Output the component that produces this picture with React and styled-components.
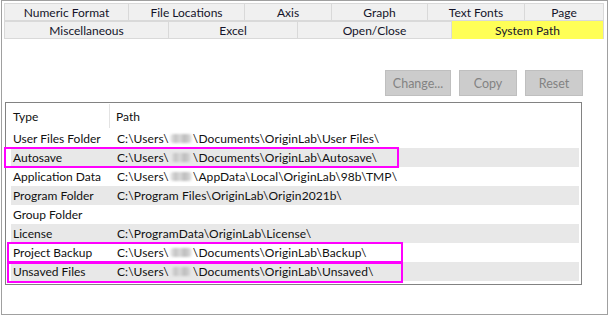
import React from "react";
import styled, { createGlobalStyle } from "styled-components";

const GlobalStyle = createGlobalStyle`
  html, body {
    margin: 0;
    padding: 0;
    background: #ffffff;
  }
  body {
    font-family: "Lato", "Noto Sans", sans-serif;
    font-size: 12px;
    color: #111111;
  }
`;

const Window = styled.div`
  box-sizing: border-box;
  width: 607px;
  height: 315px;
  margin-left: 1px;
  padding: 2px 2px 0 2px;
  border: 1px solid #a0a0a0;
  background: #ffffff;
  display: flex;
  flex-direction: column;
`;

const TabRow = styled.div`
  display: flex;
  height: 18px;
`;

const Tab = styled.div`
  box-sizing: border-box;
  width: ${({ w }) => w}px;
  display: flex;
  align-items: center;
  justify-content: center;
  background: ${({ active }) => (active ? "#ffff57" : "#f0f0f0")};
  border-top: 1px solid #d9d9d9;
  border-right: 1px solid #d9d9d9;
  border-bottom: ${({ active }) => (active ? "none" : "1px solid #d9d9d9")};
  ${({ first }) => first && "border-left: 1px solid #d9d9d9;"}
  ${({ active }) => active && "margin-top: -1px; height: 19px;"}
  color: #14142a;
  white-space: nowrap;
`;

const Page = styled.div`
  flex: 1;
  display: flex;
  flex-direction: column;
`;

const ButtonBar = styled.div`
  display: flex;
  justify-content: flex-end;
  gap: 8px;
  margin-top: 31px;
  padding-right: 22px;
`;

const Button = styled.button`
  box-sizing: border-box;
  width: ${({ w }) => w}px;
  height: 26px;
  padding: 0;
  background: #cccccc;
  border: 1px solid #bfbfbf;
  color: #838383;
  font-family: inherit;
  font-size: 12.5px;
`;

const List = styled.div`
  box-sizing: border-box;
  position: relative;
  width: 577px;
  height: 183px;
  margin: 6px 0 0 1px;
  padding: 0 2px 0 5px;
  border: 1px solid #828282;
`;

const HeaderRow = styled.div`
  display: flex;
  height: 26px;
  align-items: center;
`;

const HeaderCell = styled.div`
  box-sizing: border-box;
  width: ${({ w }) => (w ? `${w}px` : "auto")};
  flex: ${({ w }) => (w ? "none" : 1)};
  height: 24px;
  display: flex;
  align-items: center;
  padding-left: ${({ pad }) => pad}px;
  ${({ divider }) => divider && "border-right: 1px solid #e3e3e3;"}
`;

const Row = styled.div`
  position: relative;
  display: flex;
  align-items: center;
  height: 19px;
  background: ${({ striped }) => (striped ? "#e8e8e8" : "transparent")};
  white-space: nowrap;
`;

const TypeCell = styled.div`
  width: 104px;
  padding-left: 2px;
  box-sizing: border-box;
`;

const PathCell = styled.div`
  flex: 1;
  padding-left: 2px;
  letter-spacing: 0.1px;
`;

const Hidden = styled.span`
  display: inline-block;
  width: 22px;
  height: 9px;
  margin: 0 1px;
  vertical-align: 0;
  border-radius: 3px;
  background: linear-gradient(
    90deg,
    #eeeeee,
    #c4c4c4 25%,
    #dadada 45%,
    #bdbdbd 65%,
    #cfcfcf 85%,
    #eeeeee
  );
  filter: blur(1.1px);
`;

const Highlight = styled.div`
  position: absolute;
  box-sizing: border-box;
  left: ${({ left }) => left}px;
  top: ${({ top }) => top}px;
  width: ${({ w }) => w}px;
  height: ${({ h }) => h}px;
  border: 2px solid #ff00ff;
  pointer-events: none;
`;

const topTabs = [
  ["Numeric Format", 125],
  ["File Locations", 116],
  ["Axis", 87],
  ["Graph", 96],
  ["Text Fonts", 97],
  ["Page", 79],
];

const bottomTabs = [
  ["Miscellaneous", 165],
  ["Excel", 129],
  ["Open/Close", 154],
  ["System Path", 152],
];

function UserPath({ rest }) {
  return (
    <>
      C:\Users\<Hidden aria-label="user" />\{rest}
    </>
  );
}

const rows = [
  { type: "User Files Folder", path: <UserPath rest="Documents\OriginLab\User Files\" /> },
  {
    type: "Autosave",
    path: <UserPath rest="Documents\OriginLab\Autosave\" />,
    mark: { left: -7, top: -1, w: 395, h: 21 },
  },
  { type: "Application Data", path: <UserPath rest="AppData\Local\OriginLab\98b\TMP\" /> },
  { type: "Program Folder", path: "C:\\Program Files\\OriginLab\\Origin2021b\\" },
  { type: "Group Folder", path: "" },
  { type: "License", path: "C:\\ProgramData\\OriginLab\\License\\" },
  {
    type: "Project Backup",
    path: <UserPath rest="Documents\OriginLab\Backup\" />,
    mark: { left: -4, top: -1, w: 396, h: 21 },
  },
  {
    type: "Unsaved Files",
    path: <UserPath rest="Documents\OriginLab\Unsaved\" />,
    mark: { left: -4, top: 0, w: 396, h: 21 },
  },
];

export default function App() {
  return (
    <>
      <GlobalStyle />
      <Window>
        <TabRow>
          {topTabs.map(([label, w], i) => (
            <Tab key={label} w={w} first={i === 0}>
              {label}
            </Tab>
          ))}
        </TabRow>
        <TabRow>
          {bottomTabs.map(([label, w], i) => (
            <Tab key={label} w={w} first={i === 0} active={label === "System Path"}>
              {label}
            </Tab>
          ))}
        </TabRow>
        <Page>
          <ButtonBar>
            <Button w={66} disabled>Change...</Button>
            <Button w={58} disabled>Copy</Button>
            <Button w={58} disabled>Reset</Button>
          </ButtonBar>
          <List>
            <HeaderRow>
              <HeaderCell w={99} pad={2} divider>Type</HeaderCell>
              <HeaderCell pad={6}>Path</HeaderCell>
            </HeaderRow>
            {rows.map((r, i) => (
              <Row key={r.type} striped={i % 2 === 1}>
                <TypeCell>{r.type}</TypeCell>
                <PathCell>{r.path}</PathCell>
                {r.mark && <Highlight {...r.mark} />}
              </Row>
            ))}
          </List>
        </Page>
      </Window>
    </>
  );
}
